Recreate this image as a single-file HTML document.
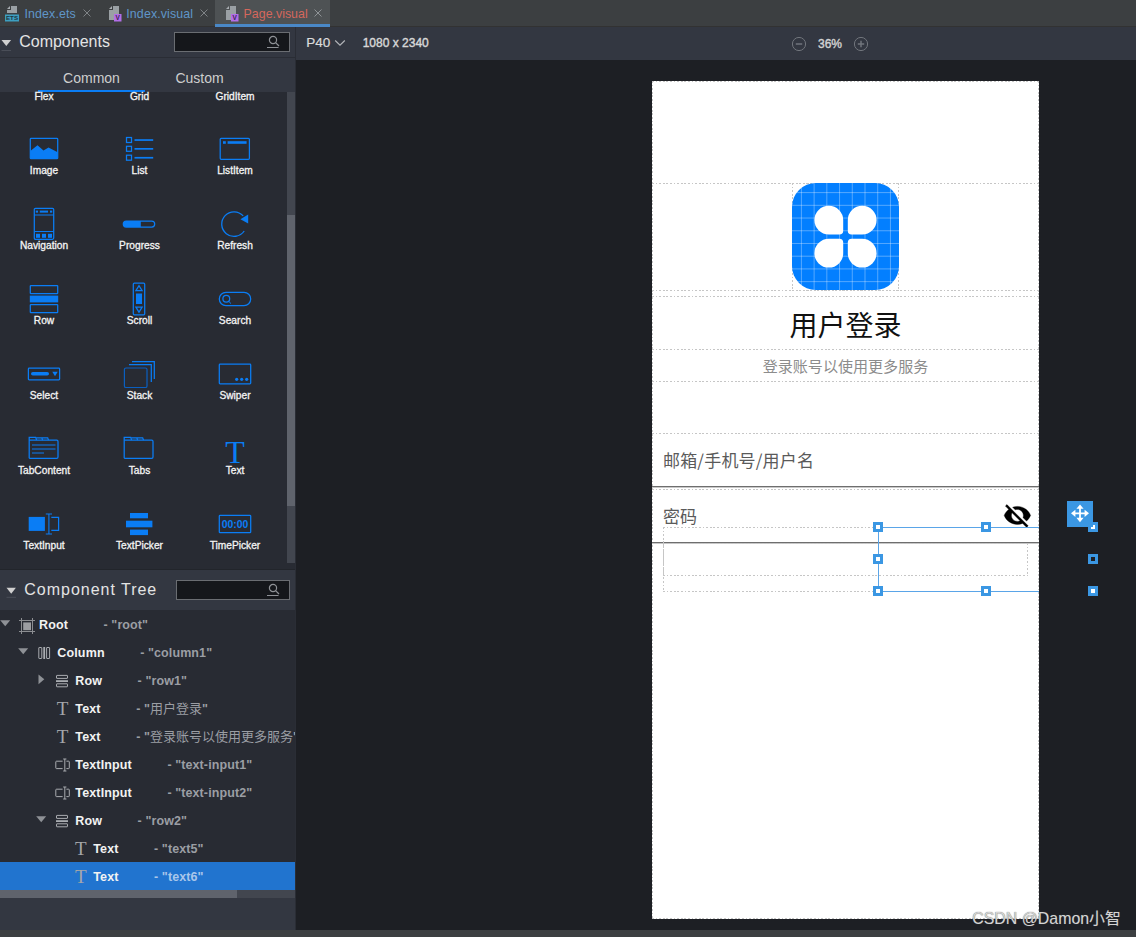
<!DOCTYPE html>
<html><head><meta charset="utf-8">
<style>
*{box-sizing:border-box;margin:0;padding:0}
html,body{width:1136px;height:937px;overflow:hidden;background:#1d1f24;font-family:"Liberation Sans","Noto Sans CJK SC",sans-serif;}
.abs{position:absolute}
#root{position:relative;width:1136px;height:937px;overflow:hidden;background:#1d1f24}
/* top tab bar */
#tabbar{left:0;top:0;width:1136px;height:27px;background:#3c3f41;border-bottom:1px solid #323232}
.tabtxt{font-size:12.4px;line-height:14px;top:7px;white-space:nowrap;letter-spacing:0.12px}
.tabx{color:#7d8184;font-size:15px;line-height:14px;top:5px;font-weight:400}
/* left panel */
#left{left:0;top:27px;width:295px;height:903px;background:#333741}
#toolbar{left:296px;top:27px;width:840px;height:33px;background:#333741}
.hdr{color:#e4e4e4;font-size:16px;white-space:nowrap}
.search{background:#15171b;border:1px solid #6a6d72}
.lbl{position:absolute;width:96px;text-align:center;font-size:10.2px;line-height:12px;color:#f4f4f4;white-space:nowrap;-webkit-text-stroke:0.3px #f4f4f4}
.tree{position:absolute;font-size:12.5px;font-weight:bold;line-height:14px;white-space:nowrap;color:#f2f2f2}
.tid{position:absolute;font-size:12.5px;font-weight:bold;line-height:14px;white-space:nowrap;color:#9b9ea4}
.hl{position:absolute;border-top:1px dashed #cfcfcf;height:0}
.handle{position:absolute;width:10px;height:10px;border:3px solid #3b97e3;background:#fff}
</style></head><body>
<div id="root">
<div id="tabbar" class="abs">
<div class="abs" style="left:215px;top:0;width:115px;height:27px;background:#4e5254;border-bottom:3px solid #4a88c7"></div>
<!-- ETS icon -->
<svg class="abs" style="left:4px;top:5px" width="16" height="17" viewBox="0 0 16 17"><path d="M7 1h6v7H3V5h4z" fill="#9aa0a4"/><path d="M3 4L6 1V4z" fill="#a9aeb2"/><rect x="1" y="9.5" width="14" height="7" fill="#3d9fc0"/><text x="8" y="15.3" font-family="Liberation Sans,sans-serif" font-size="6.2" font-weight="bold" text-anchor="middle" fill="#1f3540">ETS</text></svg>
<div class="abs tabtxt" style="left:24.5px;color:#5f96c9">Index.ets</div>
<svg class="abs" style="left:83px;top:9px" width="8" height="8" viewBox="0 0 8 8"><path d="M0.5 0.5L7.5 7.5M7.5 0.5L0.5 7.5" stroke="#7f8386" stroke-width="1" fill="none"/></svg>
<!-- V icon 1 -->
<svg class="abs" style="left:108px;top:5px" width="14" height="17" viewBox="0 0 14 17"><path d="M5 1h6v14H1V5h4z" fill="#9aa0a4"/><path d="M1 4L4 1V4z" fill="#a9aeb2"/><rect x="6" y="9" width="7.5" height="7.5" fill="#b36ee8"/><text x="9.75" y="15.2" font-family="Liberation Sans,sans-serif" font-size="6.5" font-weight="bold" text-anchor="middle" fill="#3a2350">V</text></svg>
<div class="abs tabtxt" style="left:126.3px;color:#5f96c9">Index.visual</div>
<svg class="abs" style="left:200px;top:9px" width="8" height="8" viewBox="0 0 8 8"><path d="M0.5 0.5L7.5 7.5M7.5 0.5L0.5 7.5" stroke="#7f8386" stroke-width="1" fill="none"/></svg>
<!-- V icon 2 -->
<svg class="abs" style="left:225px;top:5px" width="14" height="17" viewBox="0 0 14 17"><path d="M5 1h6v14H1V5h4z" fill="#9aa0a4"/><path d="M1 4L4 1V4z" fill="#a9aeb2"/><rect x="6" y="9" width="7.5" height="7.5" fill="#b36ee8"/><text x="9.75" y="15.2" font-family="Liberation Sans,sans-serif" font-size="6.5" font-weight="bold" text-anchor="middle" fill="#3a2350">V</text></svg>
<div class="abs tabtxt" style="left:243.6px;color:#d5675c;letter-spacing:0">Page.visual</div>
<svg class="abs" style="left:314px;top:9px" width="8" height="8" viewBox="0 0 8 8"><path d="M0.5 0.5L7.5 7.5M7.5 0.5L0.5 7.5" stroke="#8f9396" stroke-width="1" fill="none"/></svg>
</div>
<!--LEFT_START--><div class="abs" style="left:0;top:0;width:295px;height:937px;overflow:hidden"><div id="left" class="abs"></div>
<svg class="abs" style="left:1px;top:39px" width="11" height="13" viewBox="0 0 11 13"><path d="M0.5 1h9.6L5.3 7z" fill="#d0d0d0"/><path d="M0.5 11.5h9.5" stroke="#4a4e58" stroke-width="1"/></svg>
<div class="abs hdr" style="left:19.2px;top:33px;line-height:18px">Components</div>
<div class="abs search" style="left:174px;top:32px;width:116px;height:20px"></div>
<svg class="abs" style="left:266px;top:34.5px" width="15" height="14" viewBox="0 0 15 14"><circle cx="7" cy="5" r="3.6" fill="none" stroke="#8e9196" stroke-width="1.2"/><path d="M9.6 7.6L13 11" stroke="#8e9196" stroke-width="1.3"/><path d="M1 12.5h11.5" stroke="#8e9196" stroke-width="1"/></svg>
<div class="abs" style="left:0;top:57px;width:295px;height:1px;background:#2a2d35"></div>
<div class="abs" style="left:38px;top:69.7px;width:107px;text-align:center;font-size:14px;line-height:16px;color:#cecece">Common</div>
<div class="abs" style="left:146px;top:69.7px;width:107px;text-align:center;font-size:14px;line-height:16px;color:#cecece">Custom</div>
<div class="abs" style="left:0;top:92px;width:295px;height:478px;background:#282b33;border-bottom:1px solid #22252b"></div>
<div class="abs" style="left:38px;top:90px;width:107px;height:2px;background:#0a7df5"></div>
<div class="abs" style="left:287px;top:92px;width:8px;height:471px;background:#42464f"></div>
<div class="abs" style="left:287px;top:215px;width:8px;height:291px;background:#5f636c"></div>
<div class="lbl" style="left:-4px;top:90.89999999999999px">Flex</div>
<div class="lbl" style="left:91.5px;top:90.89999999999999px">Grid</div>
<div class="lbl" style="left:187px;top:90.89999999999999px">GridItem</div>
<div class="lbl" style="left:-4px;top:165.3px">Image</div>
<div class="lbl" style="left:91.5px;top:165.3px">List</div>
<div class="lbl" style="left:187px;top:165.3px">ListItem</div>
<div class="lbl" style="left:-4px;top:240.3px">Navigation</div>
<div class="lbl" style="left:91.5px;top:240.3px">Progress</div>
<div class="lbl" style="left:187px;top:240.3px">Refresh</div>
<div class="lbl" style="left:-4px;top:315.3px">Row</div>
<div class="lbl" style="left:91.5px;top:315.3px">Scroll</div>
<div class="lbl" style="left:187px;top:315.3px">Search</div>
<div class="lbl" style="left:-4px;top:390.3px">Select</div>
<div class="lbl" style="left:91.5px;top:390.3px">Stack</div>
<div class="lbl" style="left:187px;top:390.3px">Swiper</div>
<div class="lbl" style="left:-4px;top:465.3px">TabContent</div>
<div class="lbl" style="left:91.5px;top:465.3px">Tabs</div>
<div class="lbl" style="left:187px;top:465.3px">Text</div>
<div class="lbl" style="left:-4px;top:540.3px">TextInput</div>
<div class="lbl" style="left:91.5px;top:540.3px">TextPicker</div>
<div class="lbl" style="left:187px;top:540.3px">TimePicker</div>
<svg class="abs" style="left:29px;top:137px" width="30" height="23" viewBox="0 0 30 23"><rect x="1.3" y="1.3" width="27.4" height="20.4" rx="0.8" fill="none" stroke="#0a7df5" stroke-width="1.25"/><path d="M1.3 14L8.5 8.2L14.5 13.5L19.5 10.5L28.7 15.2V21.7H1.3z" fill="#0a7df5"/></svg>
<svg class="abs" style="left:125px;top:136px" width="30" height="26" viewBox="0 0 30 26"><rect x="1.5" y="1.5" width="5" height="5" fill="none" stroke="#0a7df5" stroke-width="1.25"/><rect x="1.5" y="10.3" width="5" height="5" fill="none" stroke="#0a7df5" stroke-width="1.25"/><rect x="1.5" y="19.2" width="5" height="5" fill="none" stroke="#0a7df5" stroke-width="1.25"/><rect x="9.5" y="3.2" width="18.7" height="1.7" fill="#0a7df5"/><rect x="9.5" y="12" width="18.7" height="1.7" fill="#0a7df5"/><rect x="9.5" y="20.9" width="18.7" height="1.7" fill="#0a7df5"/></svg>
<svg class="abs" style="left:219px;top:137px" width="32" height="24" viewBox="0 0 32 24"><rect x="1.2" y="1.3" width="29.2" height="21" rx="1" fill="none" stroke="#0a7df5" stroke-width="1.25"/><rect x="4" y="4.2" width="2.8" height="2.6" fill="#0a7df5"/><rect x="8.6" y="4.2" width="19" height="2.6" fill="#0a7df5"/></svg>
<svg class="abs" style="left:33px;top:207px" width="22" height="34" viewBox="0 0 22 34"><rect x="1.3" y="1.3" width="19.4" height="31" rx="1.2" fill="none" stroke="#0a7df5" stroke-width="1.25"/><path d="M1.3 8h19.4M1.3 24.5h19.4" stroke="#0a7df5" stroke-width="1" fill="none"/><rect x="2.8" y="3.6" width="2.2" height="2" fill="#0a7df5"/><rect x="6.8" y="3.6" width="8.2" height="2" fill="#0a7df5"/><rect x="17" y="3.6" width="2.2" height="2" fill="#0a7df5"/><rect x="3" y="26.8" width="4" height="4" fill="#0a7df5"/><rect x="9" y="26.8" width="4" height="4" fill="#0a7df5"/><rect x="15" y="26.8" width="4" height="4" fill="#0a7df5"/></svg>
<svg class="abs" style="left:122px;top:220px" width="34" height="8" viewBox="0 0 34 8"><rect x="1.3" y="1" width="31.4" height="6" rx="3" fill="none" stroke="#0a7df5" stroke-width="1.25"/><path d="M4.3 1h14.5v6H4.3a3 3 0 0 1 0-6z" fill="#0a7df5"/></svg>
<svg class="abs" style="left:220px;top:209px" width="30" height="29" viewBox="0 0 30 29"><path d="M23.2 6.9A12.3 12.3 0 1 0 24.2 22" fill="none" stroke="#0a7df5" stroke-width="1.3"/><path d="M28.2 5.6V14.4L20.4 10.3z" fill="#0a7df5"/></svg>
<svg class="abs" style="left:29px;top:284px" width="30" height="30" viewBox="0 0 30 30"><rect x="1.3" y="1.5" width="27.4" height="8" rx="0.6" fill="none" stroke="#0a7df5" stroke-width="1.25"/><rect x="0.8" y="11.6" width="28.4" height="6.8" fill="#0a7df5"/><rect x="1.3" y="20.5" width="27.4" height="8" rx="0.6" fill="none" stroke="#0a7df5" stroke-width="1.25"/></svg>
<svg class="abs" style="left:132px;top:282px" width="14" height="34" viewBox="0 0 14 34"><rect x="1.3" y="1.2" width="11.4" height="31.6" rx="1" fill="none" stroke="#0a7df5" stroke-width="1.25"/><path d="M3.9 8.6L7 3.6L10.1 8.6z" fill="none" stroke="#0a7df5" stroke-width="1.25"/><rect x="4" y="11.5" width="6" height="10.5" fill="#0a7df5"/><path d="M3.9 25.2L7 30.2L10.1 25.2z" fill="none" stroke="#0a7df5" stroke-width="1.25"/></svg>
<svg class="abs" style="left:218px;top:291px" width="34" height="16" viewBox="0 0 34 16"><rect x="1.3" y="1.3" width="31.4" height="13.4" rx="6.7" fill="none" stroke="#0a7df5" stroke-width="1.25"/><circle cx="8.3" cy="7.8" r="3.4" fill="none" stroke="#0a7df5" stroke-width="1.25"/><path d="M10.7 10.3L13 12.6" stroke="#0a7df5" stroke-width="1"/></svg>
<svg class="abs" style="left:27px;top:367px" width="34" height="14" viewBox="0 0 34 14"><rect x="1.4" y="1.2" width="31.2" height="11.6" rx="0.8" fill="none" stroke="#0a7df5" stroke-width="1.25"/><rect x="4" y="5" width="18" height="3.6" rx="1.8" fill="#0a7df5"/><path d="M25.3 4.8h5.4L28 9.3z" fill="#0a7df5"/></svg>
<svg class="abs" style="left:123px;top:360px" width="33" height="29" viewBox="0 0 33 29"><path d="M9 1.5h22.3v17.5" fill="none" stroke="#0a7df5" stroke-width="1.25"/><path d="M6 4.5h22.3v17.5" fill="none" stroke="#0a7df5" stroke-width="1.25"/><rect x="1.4" y="8" width="22.6" height="19.5" rx="1.6" fill="none" stroke="#0a5fc0" stroke-width="1.2"/></svg>
<svg class="abs" style="left:218px;top:363px" width="34" height="22" viewBox="0 0 34 22"><rect x="1.3" y="1.2" width="31.4" height="19.6" rx="0.8" fill="none" stroke="#0a7df5" stroke-width="1.25"/><circle cx="18.7" cy="16.3" r="1.6" fill="#0a7df5"/><circle cx="23.7" cy="16.3" r="1.6" fill="#0a7df5"/><circle cx="28.7" cy="16.3" r="1.6" fill="#0a7df5"/></svg>
<svg class="abs" style="left:28px;top:436px" width="32" height="24" viewBox="0 0 32 24"><path d="M1.2 22.3V1.4h6.5l0.9 2.6" fill="none" stroke="#0a7df5" stroke-width="1.25"/><path d="M8.2 1.8h5.6l0.8 2.3M14.3 1.8h5.4l0.8 2.3" fill="none" stroke="#0a7df5" stroke-width="1.25"/><path d="M1.2 4.2h27.5q1.3 0 1.3 1.3v15.5q0 1.3-1.3 1.3H1.2" fill="none" stroke="#0a7df5" stroke-width="1.25"/><path d="M4 9h23.5M4 13h23.5M4 17h12" stroke="#0a7df5" stroke-width="1"/></svg>
<svg class="abs" style="left:123.3px;top:436px" width="32" height="24" viewBox="0 0 32 24"><path d="M1.2 22.3V1.4h6.5l0.9 2.6" fill="none" stroke="#0a7df5" stroke-width="1.25"/><path d="M8.2 1.8h5.6l0.8 2.3M14.3 1.8h5.4l0.8 2.3" fill="none" stroke="#0a7df5" stroke-width="1.25"/><path d="M1.2 4.2h27.5q1.3 0 1.3 1.3v15.5q0 1.3-1.3 1.3H1.2" fill="none" stroke="#0a7df5" stroke-width="1.25"/></svg>
<div class="abs" style="left:215px;top:436px;width:40px;text-align:center;font-family:'Liberation Serif',serif;font-size:32px;line-height:32px;color:#0a7df5">T</div>
<svg class="abs" style="left:28px;top:513px" width="32" height="22" viewBox="0 0 32 22"><rect x="0.7" y="3.9" width="16.2" height="14" fill="#0a7df5"/><path d="M17.8 1h6.2M17.8 21h6.2M20.9 1v20" stroke="#0a7df5" stroke-width="1.1" fill="none"/><path d="M23.3 4.4h7.3v13h-7.3" fill="none" stroke="#0a7df5" stroke-width="1.25"/></svg>
<svg class="abs" style="left:126px;top:513px" width="27" height="23" viewBox="0 0 27 23"><rect x="4" y="0" width="18" height="5.3" fill="#0a7df5"/><rect x="0" y="7.7" width="26.4" height="6.6" fill="#0a7df5"/><rect x="4" y="16.6" width="18" height="5.5" fill="#0a7df5"/></svg>
<svg class="abs" style="left:218px;top:514px" width="34" height="20" viewBox="0 0 34 20"><rect x="1.3" y="1.3" width="31.4" height="17.4" rx="0.8" fill="none" stroke="#0a7df5" stroke-width="1.25"/><text x="17" y="13.8" font-family="Liberation Sans,sans-serif" font-size="10.4" font-weight="bold" text-anchor="middle" fill="#0a7df5">00:00</text></svg>
<svg class="abs" style="left:6px;top:587px" width="11" height="12" viewBox="0 0 11 12"><path d="M0.5 0.7h9.4L5.2 6.7z" fill="#d0d0d0"/><path d="M0.5 10.3h9.5" stroke="#4a4e58" stroke-width="1"/></svg>
<div class="abs hdr" style="left:24.3px;top:581px;line-height:18px;letter-spacing:0.98px">Component Tree</div>
<div class="abs search" style="left:176px;top:580px;width:114px;height:20px"></div>
<svg class="abs" style="left:265.5px;top:583px" width="15" height="14" viewBox="0 0 15 14"><circle cx="7" cy="5" r="3.6" fill="none" stroke="#8e9196" stroke-width="1.2"/><path d="M9.6 7.6L13 11" stroke="#8e9196" stroke-width="1.3"/><path d="M1 12.5h11.5" stroke="#8e9196" stroke-width="1"/></svg>
<div class="abs" style="left:0;top:610px;width:295px;height:280px;background:#282b33"></div>
<div class="abs" style="left:0;top:862px;width:295px;height:28px;background:#2174cf"></div>
<div class="abs" style="left:0;top:890px;width:295px;height:8px;background:#42464f"></div>
<div class="abs" style="left:0;top:890px;width:237px;height:8px;background:#5f636c"></div>
<svg class="abs" style="left:-0.19999999999999996px;top:620.3px" width="11" height="7" viewBox="0 0 11 7"><path d="M0.2 0.3h10L5.2 6.2z" fill="#8e9196"/></svg>
<svg class="abs" style="left:19.0px;top:618px" width="16" height="16" viewBox="0 0 16 16"><path d="M2.5 0v16M13.5 0v16M0 2.5h16M0 13.5h16" stroke="#8c8e92" stroke-width="1" fill="none"/><rect x="4.2" y="4.4" width="7.8" height="7.8" fill="#9c9ea2"/></svg>
<div class="tree" style="left:39px;top:617.8px"><span style="letter-spacing:0.14px">Root</span><span style="margin-left:35.5px;letter-spacing:0.1px;color:#9b9ea4">- "root"</span></div>
<svg class="abs" style="left:17.8px;top:648.3px" width="11" height="7" viewBox="0 0 11 7"><path d="M0.2 0.3h10L5.2 6.2z" fill="#8e9196"/></svg>
<svg class="abs" style="left:37.5px;top:646px" width="14" height="14" viewBox="0 0 14 14"><rect x="0.8" y="1.5" width="3" height="11" rx="0.4" fill="none" stroke="#a9acb0" stroke-width="1"/><rect x="5.3" y="1" width="1.8" height="12" fill="#a9acb0"/><rect x="8.6" y="1.5" width="3" height="11" rx="0.4" fill="none" stroke="#a9acb0" stroke-width="1"/></svg>
<div class="tree" style="left:57.3px;top:645.8px"><span style="letter-spacing:0.14px">Column</span><span style="margin-left:35.5px;letter-spacing:0.1px;color:#9b9ea4">- "column1"</span></div>
<svg class="abs" style="left:37.8px;top:673.8px" width="7" height="11" viewBox="0 0 7 11"><path d="M0.5 0.5L6.3 5.3L0.5 10.2z" fill="#8e9196"/></svg>
<svg class="abs" style="left:55px;top:674px" width="14" height="14" viewBox="0 0 14 14"><rect x="1.5" y="1.4" width="11" height="3" rx="0.4" fill="none" stroke="#a9acb0" stroke-width="1"/><rect x="1" y="6.2" width="12" height="1.8" fill="#a9acb0"/><rect x="1.5" y="9.8" width="11" height="3" rx="0.4" fill="none" stroke="#a9acb0" stroke-width="1"/></svg>
<div class="tree" style="left:75.3px;top:673.8px"><span style="letter-spacing:0.14px">Row</span><span style="margin-left:35.5px;letter-spacing:0.1px;color:#9b9ea4">- "row1"</span></div>
<div class="abs" style="left:54.5px;top:699px;width:16px;text-align:center;font-family:'Liberation Serif',serif;font-size:19px;line-height:20px;color:#a4a6aa">T</div>
<div class="tree" style="left:75.3px;top:701.8px"><span style="letter-spacing:0.14px">Text</span><span style="margin-left:35.5px;letter-spacing:0.1px;color:#9b9ea4">- "<span style="font-size:13px;font-weight:normal;letter-spacing:0">用户登录</span>"</span></div>
<div class="abs" style="left:54.5px;top:727px;width:16px;text-align:center;font-family:'Liberation Serif',serif;font-size:19px;line-height:20px;color:#a4a6aa">T</div>
<div class="tree" style="left:75.3px;top:729.8px"><span style="letter-spacing:0.14px">Text</span><span style="margin-left:35.5px;letter-spacing:0.1px;color:#9b9ea4">- "<span style="font-size:13px;font-weight:normal;letter-spacing:0">登录账号以使用更多服务</span>"</span></div>
<svg class="abs" style="left:54.7px;top:758px" width="15" height="14" viewBox="0 0 15 14"><path d="M7.6 3.2H1.5q-0.7 0-0.7 0.7v6q0 0.7 0.7 0.7H7.6" fill="none" stroke="#a9acb0" stroke-width="1"/><path d="M8.2 1h3.2M8.2 13h3.2M9.8 1v12" stroke="#a9acb0" stroke-width="1" fill="none"/><path d="M11.4 3.2h2.2q0.7 0 0.7 0.7v6q0 0.7-0.7 0.7H11.4" fill="none" stroke="#a9acb0" stroke-width="1"/></svg>
<div class="tree" style="left:75.3px;top:757.8px"><span style="letter-spacing:0.14px">TextInput</span><span style="margin-left:35.5px;letter-spacing:0.1px;color:#9b9ea4">- "text-input1"</span></div>
<svg class="abs" style="left:54.7px;top:786px" width="15" height="14" viewBox="0 0 15 14"><path d="M7.6 3.2H1.5q-0.7 0-0.7 0.7v6q0 0.7 0.7 0.7H7.6" fill="none" stroke="#a9acb0" stroke-width="1"/><path d="M8.2 1h3.2M8.2 13h3.2M9.8 1v12" stroke="#a9acb0" stroke-width="1" fill="none"/><path d="M11.4 3.2h2.2q0.7 0 0.7 0.7v6q0 0.7-0.7 0.7H11.4" fill="none" stroke="#a9acb0" stroke-width="1"/></svg>
<div class="tree" style="left:75.3px;top:785.8px"><span style="letter-spacing:0.14px">TextInput</span><span style="margin-left:35.5px;letter-spacing:0.1px;color:#9b9ea4">- "text-input2"</span></div>
<svg class="abs" style="left:35.8px;top:816.3px" width="11" height="7" viewBox="0 0 11 7"><path d="M0.2 0.3h10L5.2 6.2z" fill="#8e9196"/></svg>
<svg class="abs" style="left:55px;top:814px" width="14" height="14" viewBox="0 0 14 14"><rect x="1.5" y="1.4" width="11" height="3" rx="0.4" fill="none" stroke="#a9acb0" stroke-width="1"/><rect x="1" y="6.2" width="12" height="1.8" fill="#a9acb0"/><rect x="1.5" y="9.8" width="11" height="3" rx="0.4" fill="none" stroke="#a9acb0" stroke-width="1"/></svg>
<div class="tree" style="left:75.3px;top:813.8px"><span style="letter-spacing:0.14px">Row</span><span style="margin-left:35.5px;letter-spacing:0.1px;color:#9b9ea4">- "row2"</span></div>
<div class="abs" style="left:72.7px;top:839px;width:16px;text-align:center;font-family:'Liberation Serif',serif;font-size:19px;line-height:20px;color:#a4a6aa">T</div>
<div class="tree" style="left:93.2px;top:841.8px"><span style="letter-spacing:0.14px">Text</span><span style="margin-left:35.5px;letter-spacing:0.1px;color:#9b9ea4">- "text5"</span></div>
<div class="abs" style="left:72.7px;top:867px;width:16px;text-align:center;font-family:'Liberation Serif',serif;font-size:19px;line-height:20px;color:#a4a6aa">T</div>
<div class="tree" style="left:93.2px;top:869.8px"><span style="letter-spacing:0.14px">Text</span><span style="margin-left:35.5px;letter-spacing:0.1px;color:#a9c6ea">- "text6"</span></div></div>
<div class="abs" style="left:295px;top:27px;width:1px;height:903px;background:#2a2d35"></div>
<div class="abs" style="left:0;top:930px;width:1136px;height:7px;background:#3c3f41"></div><!--LEFT_END-->
<!--TOOLBAR_START--><div id="toolbar" class="abs"></div>
<div class="abs" style="left:306.3px;top:35px;font-size:13.5px;line-height:16px;color:#dcdcdc;-webkit-text-stroke:0.2px #dcdcdc">P40</div>
<svg class="abs" style="left:334px;top:39px" width="12" height="8" viewBox="0 0 12 8"><path d="M1.2 1.5L6 6.2L10.8 1.5" fill="none" stroke="#b4b6ba" stroke-width="1.1"/></svg>
<div class="abs" style="left:362.7px;top:36px;font-size:12px;line-height:14px;color:#d8d8d8;-webkit-text-stroke:0.4px #d8d8d8;white-space:nowrap">1080 x 2340</div>
<svg class="abs" style="left:791px;top:36px" width="16" height="16" viewBox="0 0 16 16"><circle cx="8" cy="8" r="6.6" fill="none" stroke="#71757c" stroke-width="1"/><path d="M4.8 8h6.4" stroke="#71757c" stroke-width="1.5"/></svg>
<div class="abs" style="left:810px;top:36.5px;width:40px;text-align:center;font-size:12px;line-height:14px;color:#d2d2d2;-webkit-text-stroke:0.4px #d2d2d2">36%</div>
<svg class="abs" style="left:853px;top:36px" width="16" height="16" viewBox="0 0 16 16"><circle cx="8" cy="8" r="6.6" fill="none" stroke="#71757c" stroke-width="1"/><path d="M4.8 8h6.4M8 4.8v6.4" stroke="#71757c" stroke-width="1.5"/></svg><!--TOOLBAR_END-->
<!--CANVAS_START--><div class="abs" style="left:652px;top:81px;width:387px;height:838px;background:#fff;overflow:hidden;font-family:'Noto Sans CJK SC','Liberation Sans',sans-serif">
<div class="abs" style="left:0px;top:0px;width:387px;height:1px;background:repeating-linear-gradient(90deg,#c6c6c6 0 1.8px,transparent 1.8px 3.6px)"></div><div class="abs" style="left:0px;top:837px;width:387px;height:1px;background:repeating-linear-gradient(90deg,#c6c6c6 0 1.8px,transparent 1.8px 3.6px)"></div><div class="abs" style="left:0px;top:0px;width:1px;height:837px;background:repeating-linear-gradient(180deg,#c6c6c6 0 1.8px,transparent 1.8px 3.6px)"></div><div class="abs" style="left:386px;top:0px;width:1px;height:837px;background:repeating-linear-gradient(180deg,#c6c6c6 0 1.8px,transparent 1.8px 3.6px)"></div>
<div class="abs" style="left:0px;top:102px;width:387px;height:1px;background:repeating-linear-gradient(90deg,#c6c6c6 0 1.8px,transparent 1.8px 3.6px)"></div>
<div class="abs" style="left:0px;top:209px;width:387px;height:1px;background:repeating-linear-gradient(90deg,#c6c6c6 0 1.8px,transparent 1.8px 3.6px)"></div>
<div class="abs" style="left:0px;top:215px;width:387px;height:1px;background:repeating-linear-gradient(90deg,#c6c6c6 0 1.8px,transparent 1.8px 3.6px)"></div>
<div class="abs" style="left:0px;top:268px;width:387px;height:1px;background:repeating-linear-gradient(90deg,#c6c6c6 0 1.8px,transparent 1.8px 3.6px)"></div>
<div class="abs" style="left:0px;top:300px;width:387px;height:1px;background:repeating-linear-gradient(90deg,#c6c6c6 0 1.8px,transparent 1.8px 3.6px)"></div>
<div class="abs" style="left:0px;top:352px;width:387px;height:1px;background:repeating-linear-gradient(90deg,#c6c6c6 0 1.8px,transparent 1.8px 3.6px)"></div>
<div class="abs" style="left:0px;top:408px;width:387px;height:1px;background:repeating-linear-gradient(90deg,#c6c6c6 0 1.8px,transparent 1.8px 3.6px)"></div>
<div class="abs" style="left:140px;top:102px;width:107px;height:1px;background:repeating-linear-gradient(90deg,#c6c6c6 0 1.8px,transparent 1.8px 3.6px)"></div><div class="abs" style="left:140px;top:209px;width:107px;height:1px;background:repeating-linear-gradient(90deg,#c6c6c6 0 1.8px,transparent 1.8px 3.6px)"></div><div class="abs" style="left:140px;top:102px;width:1px;height:107px;background:repeating-linear-gradient(180deg,#c6c6c6 0 1.8px,transparent 1.8px 3.6px)"></div><div class="abs" style="left:246px;top:102px;width:1px;height:107px;background:repeating-linear-gradient(180deg,#c6c6c6 0 1.8px,transparent 1.8px 3.6px)"></div>
<svg class="abs" style="left:140px;top:102px" width="107" height="107" viewBox="0 0 107 107"><defs><clipPath id="ic"><rect x="0" y="0" width="107" height="107" rx="24" ry="24"/></clipPath></defs><g clip-path="url(#ic)"><rect width="107" height="107" fill="#037fff"/><path d="M9.40 0V107M0 9.60H107" stroke="#fff" stroke-opacity="0.33" stroke-width="1"/><path d="M22.12 0V107M0 22.32H107" stroke="#fff" stroke-opacity="0.33" stroke-width="1"/><path d="M34.84 0V107M0 35.04H107" stroke="#fff" stroke-opacity="0.33" stroke-width="1"/><path d="M47.56 0V107M0 47.76H107" stroke="#fff" stroke-opacity="0.33" stroke-width="1"/><path d="M60.28 0V107M0 60.48H107" stroke="#fff" stroke-opacity="0.33" stroke-width="1"/><path d="M73.00 0V107M0 73.20H107" stroke="#fff" stroke-opacity="0.33" stroke-width="1"/><path d="M85.72 0V107M0 85.92H107" stroke="#fff" stroke-opacity="0.33" stroke-width="1"/><path d="M98.44 0V107M0 98.64H107" stroke="#fff" stroke-opacity="0.33" stroke-width="1"/></g><path d="M36.8 22.7a14.4 14.4 0 0 0 0 28.8h10.6q3.8 0 3.8-3.8V37.1A14.4 14.4 0 0 0 36.8 22.7z" fill="#fff"/><path d="M70.2 22.7a14.4 14.4 0 0 1 0 28.8h-10.6q-3.8 0-3.8-3.8V37.1A14.4 14.4 0 0 1 70.2 22.7z" fill="#fff"/><path d="M36.8 84.6a14.4 14.4 0 0 1 0-28.8h10.6q3.8 0 3.8 3.8V70.2A14.4 14.4 0 0 1 36.8 84.6z" fill="#fff"/><path d="M70.2 84.6a14.4 14.4 0 0 0 0-28.8h-10.6q-3.8 0-3.8 3.8V70.2A14.4 14.4 0 0 0 70.2 84.6z" fill="#fff"/></svg>
<div class="abs" style="left:0;top:223px;width:387px;text-align:center;font-size:28px;line-height:40px;color:#111;white-space:nowrap">用户登录</div>
<div class="abs" style="left:0;top:273px;width:387px;text-align:center;font-size:15.05px;line-height:24px;color:#8c8c8c;white-space:nowrap">登录账号以使用更多服务</div>
<div class="abs" style="left:11px;top:367px;font-size:17px;line-height:24px;color:#5a5a5a;white-space:nowrap;letter-spacing:0.18px">邮箱/手机号/用户名</div>
<div class="abs" style="left:0;top:405px;width:387px;height:1px;background:#6e6e6e"></div>
<div class="abs" style="left:0;top:406px;width:387px;height:1px;background:#c8c8c8"></div>
<div class="abs" style="left:11px;top:423px;font-size:17px;line-height:24px;color:#5a5a5a;white-space:nowrap">密码</div>
<div class="abs" style="left:0;top:461px;width:387px;height:1px;background:#6e6e6e"></div>
<div class="abs" style="left:0;top:462px;width:387px;height:1px;background:#c8c8c8"></div>
<svg class="abs" style="left:351.20000000000005px;top:419.5px" width="28.8" height="28.8" viewBox="0 0 24 24"><path fill="#000" fill-rule="evenodd" stroke="#000" stroke-width="0.3" d="M12 7c2.76 0 5 2.24 5 5 0 .65-.13 1.26-.36 1.83l2.92 2.92c1.51-1.26 2.7-2.89 3.43-4.75-1.73-4.39-6-7.5-11-7.5-1.4 0-2.74.25-3.98.7l2.16 2.16C10.74 7.13 11.35 7 12 7zM2 4.27l2.28 2.28.46.46C3.08 8.3 1.78 10.02 1 12c1.73 4.39 6 7.5 11 7.5 1.55 0 3.03-.3 4.38-.84l.42.42L19.73 22 21 20.73 3.27 3 2 4.27zM7.53 9.8L14.2 16.47c-.67.33-1.41.53-2.2.53-2.76 0-5-2.24-5-5 0-.79.2-1.53.53-2.2z"/></svg>
<div class="abs" style="left:11px;top:446px;width:376px;height:1px;background:repeating-linear-gradient(90deg,#c6c6c6 0 1.8px,transparent 1.8px 3.6px)"></div><div class="abs" style="left:11px;top:510px;width:376px;height:1px;background:repeating-linear-gradient(90deg,#c6c6c6 0 1.8px,transparent 1.8px 3.6px)"></div><div class="abs" style="left:11px;top:446px;width:1px;height:64px;background:repeating-linear-gradient(180deg,#c6c6c6 0 1.8px,transparent 1.8px 3.6px)"></div>
<div class="abs" style="left:11px;top:462px;width:365px;height:1px;background:repeating-linear-gradient(90deg,#c6c6c6 0 1.8px,transparent 1.8px 3.6px)"></div><div class="abs" style="left:11px;top:494px;width:365px;height:1px;background:repeating-linear-gradient(90deg,#c6c6c6 0 1.8px,transparent 1.8px 3.6px)"></div><div class="abs" style="left:11px;top:462px;width:1px;height:32px;background:repeating-linear-gradient(180deg,#c6c6c6 0 1.8px,transparent 1.8px 3.6px)"></div><div class="abs" style="left:375px;top:462px;width:1px;height:32px;background:repeating-linear-gradient(180deg,#c6c6c6 0 1.8px,transparent 1.8px 3.6px)"></div>
<div class="abs" style="left:226px;top:446px;width:300px;height:65px;border:1px solid #5aa5e8"></div>
</div>
<div class="handle" style="left:873px;top:522px;background:#fff"></div>
<div class="handle" style="left:981px;top:522px;background:#fff"></div>
<div class="handle" style="left:1088px;top:522px;background:#fff"></div>
<div class="handle" style="left:873px;top:554px;background:#fff"></div>
<div class="handle" style="left:1088px;top:554px;background:transparent"></div>
<div class="handle" style="left:873px;top:586px;background:#fff"></div>
<div class="handle" style="left:981px;top:586px;background:#fff"></div>
<div class="handle" style="left:1088px;top:586px;background:#fff"></div>
<svg class="abs" style="left:1067px;top:501px" width="26" height="26" viewBox="0 0 26 26"><rect width="26" height="26" fill="#3b97e3"/><path d="M13 3.4L16.6 7.8H13.9V11.4H17.6V8.7L22 12.3L17.6 15.9V13.2H13.9V16.8H16.6L13 21.2L9.4 16.8H12.1V13.2H8.4V15.9L4 12.3L8.4 8.7V11.4H12.1V7.8H9.4z" fill="#fff"/></svg>
<div class="abs" style="left:972.3px;top:908.5px;font-size:15.9px;line-height:20px;color:#d4d4d4;white-space:nowrap;font-family:'Liberation Sans','Noto Sans CJK SC',sans-serif;text-shadow:0 0 1px #555">CSDN @Damon小智</div><!--CANVAS_END-->
</div>
</body></html>
